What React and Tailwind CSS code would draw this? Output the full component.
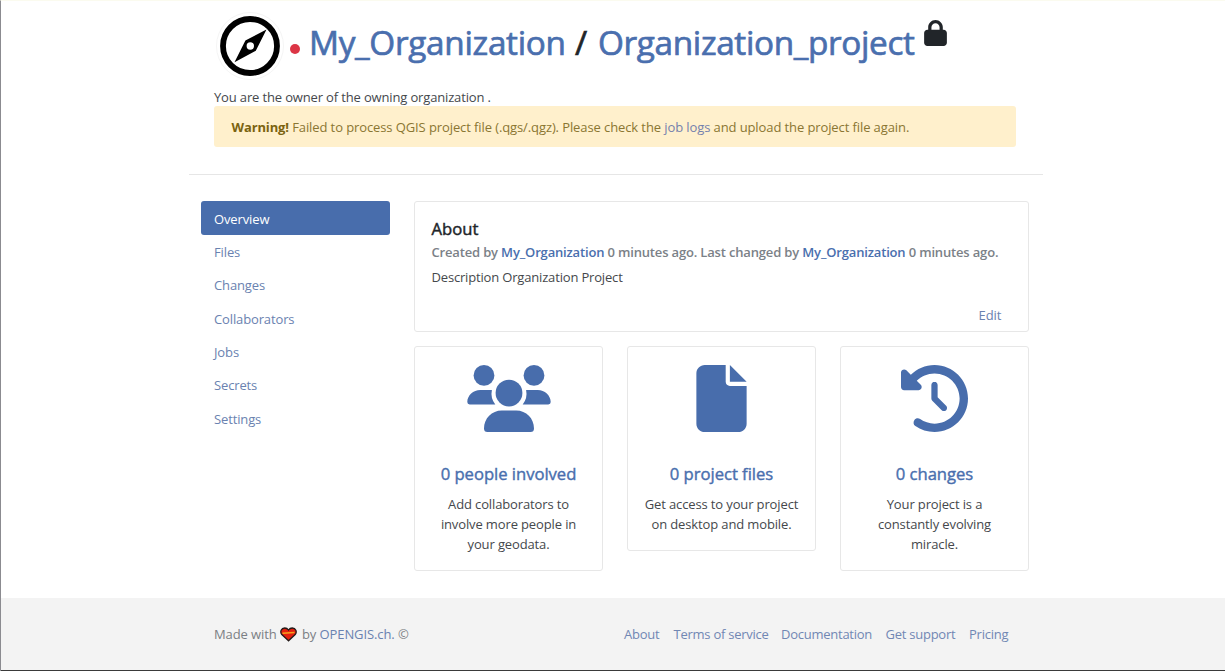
import { FaFile, FaClockRotateLeft, FaLock } from "react-icons/fa6";

function PeopleIcon({ className }) {
  return (
    <svg className={className} viewBox="0 0 83.4 67" fill="currentColor">
      <circle cx="16.700" cy="10.400" r="10.400" />
      <circle cx="66.700" cy="10.400" r="10.400" />
      <circle cx="41.700" cy="28.100" r="13.400" />
      <path d="M13 25H24.600A17.400 17.400 0 0 0 28 39.400H2.400A2.400 2.400 0 0 1 0 37C0 30.500 6 25 13 25Z" />
      <path d="M70.400 25H58.800A17.400 17.400 0 0 1 55.400 39.400H81A2.400 2.400 0 0 0 83.400 37C83.400 30.500 77.400 25 70.400 25Z" />
      <path d="M34.500 45.600H48.900C59 45.600 66.700 53.500 66.700 63.500A3.500 3.500 0 0 1 63.200 67H20.200A3.500 3.500 0 0 1 16.700 63.500C16.700 53.500 24.500 45.600 34.500 45.600Z" />
    </svg>
  );
}

const navItems = ["Overview", "Files", "Changes", "Collaborators", "Jobs", "Secrets", "Settings"];

const stats = [
  { Icon: PeopleIcon, size: "w-[84px]", title: "0 people involved", lines: ["Add collaborators to", "involve more people in", "your geodata."] },
  { Icon: FaFile, size: "w-[67px]", title: "0 project files", lines: ["Get access to your project", "on desktop and mobile."] },
  { Icon: FaClockRotateLeft, size: "w-[67px]", title: "0 changes", lines: ["Your project is a", "constantly evolving", "miracle."] },
];

const footerLinks = [
  { label: "About", width: "w-[36px]" },
  { label: "Terms of service", width: "w-[94px]" },
  { label: "Documentation", width: "w-[91px]" },
  { label: "Get support", width: "w-[70px]" },
  { label: "Pricing", width: "w-[40px]" },
];

function Compass() {
  return (
    <svg className="size-[68px] shrink-0" viewBox="0 0 68 68">
      <circle cx="34" cy="34" r="33.5" fill="#fff" stroke="#f5f5f5" />
      <circle cx="34" cy="34" r="27" fill="none" stroke="#000" strokeWidth="5.8" />
      <path fillRule="evenodd" fill="#000" d="M50.5 17.5 39.8 38.8 18.5 50.2 29.400 28.400ZM34.300 30.300a3.700 3.700 0 1 0 0 7.400 3.700 3.700 0 0 0 0-7.400Z" />
    </svg>
  );
}

function Heart() {
  return (
    <svg className="h-[15px] w-[17px]" viewBox="0 0 17 15">
      <path d="M8.5 13.8 1.8 7.6C-.3 5 1.2 1 4.7 1 6.600 1 7.800 2 8.500 3 9.200 2 10.400 1 12.300 1c3.500 0 5 4 2.900 6.600Z" fill="#e3200f" stroke="#231a18" strokeWidth="1.300" />
      <path d="M2.300 5.400 14.800 4.800 14.300 6.300 2.700 6.900Z" fill="#f6a01b" />
    </svg>
  );
}

function Header() {
  return (
    <header className="ml-[188px] h-[174px] w-[854px] border-b border-[#e6e6e6] pl-[25px]">
      <h1 className="flex h-[86px] items-start pt-[11px] text-[33.33px] leading-[40px] text-[#212529] [-webkit-text-stroke:0.700px_currentColor]">
        <span className="ml-[2px]"><Compass /></span>
        <span className="mt-[32px] ml-[6px] size-[10px] rounded-full bg-[#dc3545]" />
        <span className="mt-[10px] ml-[9px] flex whitespace-nowrap">
          <a className="w-[258px] tracking-[-0.3px] text-[#4a6fae]">My_Organization</a>
          <span className="ml-[8px] w-[14px]">/</span>
          <a className="ml-[9px] w-[316px] tracking-[-0.35px] text-[#4a6fae]">Organization_project</a>
        </span>
        <FaLock className="mt-[7.500px] ml-[9.500px] h-[26px] w-[23px]" />
      </h1>
      <p className="h-[19px] leading-[20px] tracking-[-0.15px] text-[#45484c]">You are the owner of the owning organization .</p>
      <div className="flex h-[41px] w-[802px] items-center rounded-[3px] bg-[#fff0cc] pt-[3px] pl-[17.500px] tracking-[-0.1px] whitespace-pre text-[#8a7632]">
        <p>
          <b className="tracking-[-0.13px] text-[#7b6310]">Warning!</b>
          {" Failed to process QGIS project file (.qgs/.qgz). Please check the "}
          <a className="text-[#7581ac]">job logs</a>
          {" and upload the project file again."}
        </p>
      </div>
    </header>
  );
}

function Sidebar() {
  return (
    <nav className="w-[189px]">
      {navItems.map((item, i) => (
        <a
          key={item}
          className={
            i === 0
              ? "flex h-[33.330px] items-center rounded-[3px] bg-[#486dac] pt-[3px] pl-[13.500px] tracking-[-0.13px] text-white"
              : "flex h-[33.330px] items-center pt-[3px] pl-[13.500px] tracking-[-0.13px] text-[#6a82b0]"
          }
        >
          {item}
        </a>
      ))}
    </nav>
  );
}

function About() {
  return (
    <section className="h-[131px] rounded-[3px] border border-[#e7e7e7] pt-[17px] pr-[26.500px] pl-[16.500px]">
      <h2 className="text-[16.670px] leading-[20px] text-[#212529] [-webkit-text-stroke:0.450px_currentColor]">About</h2>
      <p className="mt-[3px] leading-[20px] font-semibold tracking-[-0.165px] whitespace-nowrap text-[#7b8187]">
        Created by <a className="text-[#4a6fae]">My_Organization</a> 0 minutes ago. Last changed by{" "}
        <a className="text-[#4a6fae]">My_Organization</a> 0 minutes ago.
      </p>
      <p className="mt-[5px] leading-[20px] tracking-[-0.17px] text-[#45484c]">Description Organization Project</p>
      <p className="mt-[18px] text-right leading-[20px] text-[#6a82b0]">Edit</p>
    </section>
  );
}

function StatCard({ Icon, size, title, lines }) {
  return (
    <article className="flex w-[189px] flex-col items-center rounded-[3px] border border-[#e7e7e7] pt-[18px] pb-[16px] text-center">
      <Icon className={`h-[67px] text-[#486dac] ${size}`} />
      <h3 className="mt-[32px] text-[16.670px] leading-[20px] tracking-[-0.04px] text-[#4a6fae] [-webkit-text-stroke:0.400px_currentColor]">{title}</h3>
      <p className="mt-[10px] leading-[20px] tracking-[-0.13px] text-[#45484c]">
        {lines.map((line) => (
          <span key={line} className="block whitespace-nowrap">{line}</span>
        ))}
      </p>
    </article>
  );
}

function Footer() {
  return (
    <footer className="mt-auto flex h-[73px] w-full items-center justify-between border-b border-[#3a3a3a] bg-[#f3f3f3] pr-[216px] pl-[213px] leading-[20px] text-[#7b7f84]">
      <p className="flex items-center tracking-[-0.1px] whitespace-pre">
        <span className="w-[66px]">Made with</span>
        <Heart />
        <span className="ml-[5px]">by <a className="text-[#6a82b0]">OPENGIS.ch.</a> ©</span>
      </p>
      <div className="flex gap-[13.500px] tracking-[-0.250px] whitespace-nowrap text-[#7187b3]">
        {footerLinks.map(({ label, width }) => (
          <a key={label} className={width}>{label}</a>
        ))}
      </div>
    </footer>
  );
}

export default function App() {
  return (
    <div className="flex h-[671px] w-full flex-col overflow-hidden border-t border-l border-t-[#fbfbef] border-l-[#8b8b90] bg-white font-['Open_Sans','Noto_Sans',sans-serif] text-[13px]">
      <Header />
      <main className="mt-[26.400px] ml-[199.500px] flex gap-[24.500px]">
        <Sidebar />
        <div className="flex w-[615px] flex-col gap-[13.500px]">
          <About />
          <div className="flex items-start justify-between">
            {stats.map((s) => <StatCard key={s.title} {...s} />)}
          </div>
        </div>
      </main>
      <Footer />
    </div>
  );
}
